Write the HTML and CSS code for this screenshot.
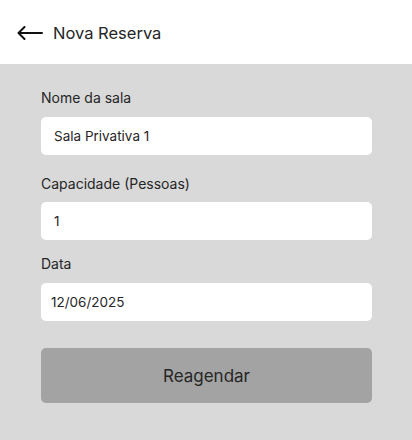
FILE: index.html
```html
<!DOCTYPE html>
<html lang="pt-BR">
<head>
<meta charset="utf-8">
<link rel="stylesheet" href="styles.css">
</head>
<body>
<header class="topbar">
  <svg class="back" width="26" height="14" viewBox="0 0 26 14" fill="none" stroke="#111" stroke-width="2" stroke-linecap="round" stroke-linejoin="round">
    <path d="M25 7H2"/>
    <path d="M7.5 1L1.5 7l6 6"/>
  </svg>
  <h1 class="title">Nova Reserva</h1>
</header>
<main class="form">
  <label class="label first">Nome da sala</label>
  <input class="field" type="text" value="Sala Privativa 1">
  <label class="label second">Capacidade (Pessoas)</label>
  <input class="field" type="text" value="1">
  <label class="label third">Data</label>
  <input class="field date" type="text" value="12/06/2025">
  <button class="submit" type="button">Reagendar</button>
</main>
</body>
</html>
```
FILE: styles.css
```css
* { box-sizing: border-box; }
html, body { margin: 0; padding: 0; }
body {
  width: 412px;
  height: 440px;
  background: #d9d9d9;
  font-family: Inter, "Noto Sans", sans-serif;
  color: #262626;
  overflow: hidden;
}
.topbar {
  height: 64px;
  background: #ffffff;
  display: flex;
  align-items: center;
  padding-left: 17px;
  padding-top: 2px;
}
.back { display: block; }
.title {
  margin: 0 0 0 10px;
  font-size: 16.5px;
  font-weight: 400;
  color: #262626;
}
.form {
  display: flex;
  flex-direction: column;
  padding: 0 40px 0 41px;
}
.label {
  font-size: 14px;
  line-height: 20px;
  margin-bottom: 9px;
  color: #262626;
}
.label.first { margin-top: 24px; }
.label.second { margin-top: 19px; margin-bottom: 8px; }
.label.third { margin-top: 14px; }
.field {
  height: 38px;
  border: none;
  border-radius: 5px;
  background: #ffffff;
  padding: 0 13px;
  font-family: inherit;
  font-size: 13.5px;
  color: #262626;
  outline: none;
}
.field.date { padding-left: 10px; }
.submit {
  margin-top: 27px;
  height: 55px;
  border: none;
  border-radius: 5px;
  background: #a3a3a3;
  font-family: inherit;
  font-size: 17px;
  color: #262626;
  padding: 0;
}
```
